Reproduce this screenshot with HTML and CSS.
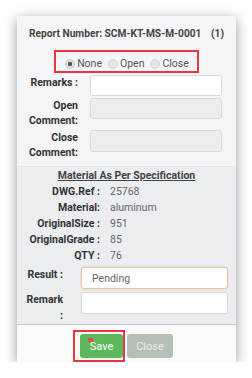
FILE: index.html
```html
<!DOCTYPE html>
<html lang="en">
<head>
    <meta charset="UTF-8">
    <meta name="viewport" content="width=device-width, initial-scale=1.0">
    <title>Inspection Report</title>
    <link rel="stylesheet" href="styles.css">
</head>
<body>

<div class="modal">
    <div class="modal-top">
        <div class="report-title">
            <span>Report Number: SCM-KT-MS-M-0001</span>
            <span>(1)</span>
        </div>

        <div class="status-group">
            <label class="radio"><input type="radio" name="status" checked disabled> None</label>
            <label class="radio"><input type="radio" name="status" disabled> Open</label>
            <label class="radio"><input type="radio" name="status" disabled> Close</label>
        </div>

        <div class="form-row">
            <label>Remarks :</label>
            <input type="text" class="field">
        </div>
        <div class="form-row">
            <label>Open Comment:</label>
            <input type="text" class="field" disabled>
        </div>
        <div class="form-row">
            <label>Close Comment:</label>
            <input type="text" class="field tall" disabled>
        </div>
    </div>

    <div class="material">
        <h4>Material As Per Specification</h4>
        <div class="spec">
            <span class="spec-label">DWG.Ref :</span><span>25768</span>
            <span class="spec-label">Material:</span><span>aluminum</span>
            <span class="spec-label">OriginalSize :</span><span>951</span>
            <span class="spec-label">OriginalGrade :</span><span>85</span>
            <span class="spec-label">QTY :</span><span>76</span>
        </div>

        <div class="result-row">
            <label>Result :</label>
            <input type="text" class="field focused" value="Pending">
        </div>
        <div class="result-row">
            <label>Remark :</label>
            <input type="text" class="field">
        </div>
    </div>

    <div class="modal-footer">
        <button class="btn btn-save">Save<span class="marker"></span></button>
        <button class="btn btn-close" disabled>Close</button>
    </div>
</div>

</body>
</html>
```

FILE: styles.css
```css
body {
    font-family: Roboto, 'Liberation Sans', sans-serif;
    margin: 0;
    background: #ffffff;
    color: #333;
}
.modal {
    width: 219px;
    margin: 16px 0 0 17px;
    background: #f5f5f7;
    box-shadow: 0 3px 12px rgba(0, 0, 0, 0.4);
}
.modal-top {
    padding: 11px 0 4px;
}
.report-title {
    display: flex;
    justify-content: space-between;
    padding: 0 12px;
    font-size: 10.2px;
    font-weight: bold;
    line-height: 13px;
    color: #444;
}
.status-group {
    width: fit-content;
    margin: 10px auto 2px;
    padding: 6px 8px 2px 9px;
    border: 2px solid #e8373f;
    display: flex;
    gap: 6px;
    line-height: 11px;
}
.radio {
    display: flex;
    align-items: center;
    font-size: 10.5px;
    color: #555;
}
.radio input {
    appearance: none;
    width: 10px;
    height: 10px;
    margin: 0 2px 0 0;
    border-radius: 50%;
    border: 1px solid #d4d4d4;
    background: #e6e6e6;
}
.radio input:checked {
    background: radial-gradient(circle, #555 0 2px, #e0e0e0 2.5px);
    border-color: #c8c8c8;
}
.form-row {
    display: grid;
    grid-template-columns: 61px 1fr;
    column-gap: 12px;
    padding-right: 14px;
    margin-bottom: 2px;
}
.form-row:first-of-type {
    margin-bottom: 3px;
}
.form-row label, .result-row label {
    text-align: right;
    font-size: 10.5px;
    font-weight: bold;
    line-height: 15px;
    color: #333;
}
.field {
    height: 21px;
    box-sizing: border-box;
    border: 1px solid #d9d9d9;
    border-radius: 3px;
    background: #fff;
    font-family: inherit;
    font-size: 10.5px;
    color: #666;
    padding: 0 10px;
    width: 100%;
    margin: 0;
}
.field.tall {
    height: 22px;
}
.field:disabled {
    background: #ededed;
}
.material {
    background: #ecedf1;
    border-top: 1px solid #e6e6e8;
    border-bottom: 1px solid #cbcbcb;
    padding: 2px 8px 0 0;
}
.material h4 {
    margin: 0;
    text-align: center;
    font-size: 10.5px;
    line-height: 14px;
    text-decoration: underline;
    color: #444;
    padding-left: 8px;
}
.spec {
    display: grid;
    grid-template-columns: 83px 1fr;
    column-gap: 10px;
    line-height: 16px;
    font-size: 10.5px;
    color: #666;
    margin: 1px 0 3px;
}
.spec-label {
    text-align: right;
    font-weight: bold;
    color: #333;
}
.result-row {
    display: grid;
    grid-template-columns: 41px 1fr;
    column-gap: 18px;
    padding-left: 5px;
}
.result-row + .result-row {
    margin-top: 3px;
}
.result-row label {
    line-height: 16px;
}
.result-row .field {
    height: 22px;
}
.field.focused {
    border-color: #efc58a;
    box-shadow: 0 0 2px rgba(102, 175, 233, 0.4);
}
.modal-footer {
    background: #fafafa;
    display: flex;
    justify-content: center;
    gap: 4px;
    padding: 9px 0 4px;
}
.btn {
    height: 24px;
    border: none;
    border-radius: 3px;
    font-family: inherit;
    font-size: 11px;
    color: #fff;
    padding: 0;
}
.btn-save {
    width: 43px;
    background: #5cb85c;
    position: relative;
}
.btn-save::before {
    content: "";
    position: absolute;
    left: -7px;
    top: -4px;
    right: -2px;
    bottom: -4px;
    border: 2px solid #e8373f;
}
.marker {
    position: absolute;
    left: 8px;
    top: 4px;
    width: 5px;
    height: 4px;
    background: #ee4a4a;
}
.btn-close {
    width: 46px;
    background: #b3c0b6;
    color: #e6ece7;
}
```
